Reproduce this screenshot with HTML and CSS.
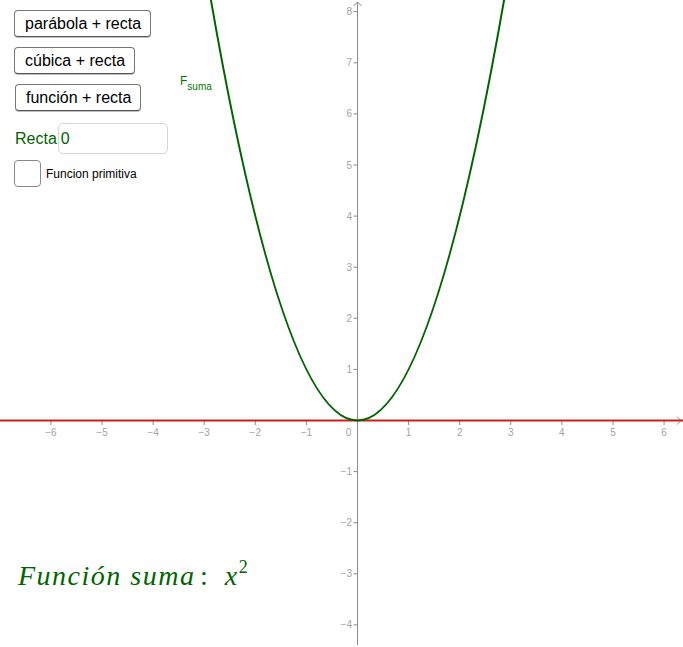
FILE: index.html
```html
<!DOCTYPE html>
<html lang="es">
<head>
<meta charset="utf-8">
<title>Función suma</title>
<link rel="stylesheet" href="styles.css">
</head>
<body>
<div class="app">
  <svg class="graph" width="683" height="647" viewBox="0 0 683 647" xmlns="http://www.w3.org/2000/svg">
    <g class="axis" stroke="#8c8c8c" stroke-width="1" fill="none">
      <line x1="0" y1="420.5" x2="682" y2="420.5"/>
      <line x1="357.5" y1="2" x2="357.5" y2="645"/>
      <polyline points="353.5,6 357.5,2 361.5,6"/>
      <polyline points="677,416.5 681,420.5 677,424.5"/>
      <!-- x ticks -->
      <line x1="50.9" y1="421" x2="50.9" y2="425"/>
      <line x1="102" y1="421" x2="102" y2="425"/>
      <line x1="153.1" y1="421" x2="153.1" y2="425"/>
      <line x1="204.2" y1="421" x2="204.2" y2="425"/>
      <line x1="255.3" y1="421" x2="255.3" y2="425"/>
      <line x1="306.4" y1="421" x2="306.4" y2="425"/>
      <line x1="408.6" y1="421" x2="408.6" y2="425"/>
      <line x1="459.7" y1="421" x2="459.7" y2="425"/>
      <line x1="510.8" y1="421" x2="510.8" y2="425"/>
      <line x1="561.9" y1="421" x2="561.9" y2="425"/>
      <line x1="613" y1="421" x2="613" y2="425"/>
      <line x1="664.1" y1="421" x2="664.1" y2="425"/>
      <!-- y ticks -->
      <line x1="353.5" y1="11.7" x2="357.5" y2="11.7"/>
      <line x1="353.5" y1="62.8" x2="357.5" y2="62.8"/>
      <line x1="353.5" y1="113.9" x2="357.5" y2="113.9"/>
      <line x1="353.5" y1="165" x2="357.5" y2="165"/>
      <line x1="353.5" y1="216.1" x2="357.5" y2="216.1"/>
      <line x1="353.5" y1="267.2" x2="357.5" y2="267.2"/>
      <line x1="353.5" y1="318.3" x2="357.5" y2="318.3"/>
      <line x1="353.5" y1="369.4" x2="357.5" y2="369.4"/>
      <line x1="353.5" y1="471.6" x2="357.5" y2="471.6"/>
      <line x1="353.5" y1="522.7" x2="357.5" y2="522.7"/>
      <line x1="353.5" y1="573.8" x2="357.5" y2="573.8"/>
      <line x1="353.5" y1="624.9" x2="357.5" y2="624.9"/>
    </g>
    <g class="xlabels" text-anchor="middle">
      <text x="50.9" y="436">−6</text>
      <text x="102" y="436">−5</text>
      <text x="153.1" y="436">−4</text>
      <text x="204.2" y="436">−3</text>
      <text x="255.3" y="436">−2</text>
      <text x="306.4" y="436">−1</text>
      <text x="348.5" y="436">0</text>
      <text x="408.6" y="436">1</text>
      <text x="459.7" y="436">2</text>
      <text x="510.8" y="436">3</text>
      <text x="561.9" y="436">4</text>
      <text x="613" y="436">5</text>
      <text x="664.1" y="436">6</text>
    </g>
    <g class="ylabels" text-anchor="end">
      <text x="352" y="15.2">8</text>
      <text x="352" y="66.3">7</text>
      <text x="352" y="117.4">6</text>
      <text x="352" y="168.5">5</text>
      <text x="352" y="219.6">4</text>
      <text x="352" y="270.7">3</text>
      <text x="352" y="321.8">2</text>
      <text x="352" y="372.9">1</text>
      <text x="352" y="475.1">−1</text>
      <text x="352" y="526.2">−2</text>
      <text x="352" y="577.3">−3</text>
      <text x="352" y="628.4">−4</text>
    </g>
    <line x1="0" y1="420.5" x2="683" y2="420.5" stroke="#cc1f1f" stroke-width="2"/>
    <path d="M209.31,-9.25 Q357.5,850.25 505.69,-9.25" fill="none" stroke="#006400" stroke-width="2"/>
  </svg>

  <div class="panel">
    <button class="btn">parábola + recta</button>
    <button class="btn">cúbica + recta</button>
    <button class="btn btn-shift">función + recta</button>
    <div class="input-row">
      <span class="input-label">Recta</span>
      <span class="input-box">0</span>
    </div>
    <div class="check-row">
      <span class="checkbox"></span>
      <span class="check-label">Funcion primitiva</span>
    </div>
  </div>

  <div class="fsuma">F<span class="sub">suma</span></div>

  <div class="formula"><span class="word">Función</span> <span class="word">suma</span> <span class="colon">:</span> <span class="var">x</span><span class="sup">2</span></div>
</div>
</body>
</html>
```

FILE: styles.css
```css
html, body {
  margin: 0;
  padding: 0;
  background: #ffffff;
}

.app {
  position: relative;
  width: 683px;
  height: 647px;
  overflow: hidden;
  font-family: "Liberation Sans", Arial, sans-serif;
}

.graph {
  position: absolute;
  left: 0;
  top: 0;
  display: block;
}

.xlabels text,
.ylabels text {
  font-family: "Liberation Sans", Arial, sans-serif;
  font-size: 10px;
  fill: #a3a3a3;
}

.panel {
  position: absolute;
  left: 14px;
  top: 10px;
  display: flex;
  flex-direction: column;
  align-items: flex-start;
}

.btn {
  box-sizing: border-box;
  font-family: "Liberation Sans", Arial, sans-serif;
  font-size: 16px;
  color: #000;
  background: #ffffff;
  border: 1px solid #777;
  border-bottom-color: #555;
  border-radius: 4px;
  box-shadow: 0 1px 0 rgba(0, 0, 0, 0.25);
  height: 27px;
  padding: 0 9px 0 10px;
  margin: 0 0 10px 0;
  line-height: 25px;
  cursor: pointer;
}

.btn-shift {
  margin-left: 1px;
}

.input-row {
  display: flex;
  align-items: center;
  margin-top: 2px;
  margin-left: 1px;
}

.input-label {
  font-size: 16px;
  color: #006400;
  margin-right: 1px;
}

.input-box {
  box-sizing: border-box;
  width: 110px;
  height: 31px;
  border: 1px solid #d6d6d6;
  border-radius: 5px;
  font-size: 16px;
  color: #006400;
  padding-left: 2px;
  line-height: 29px;
}

.check-row {
  display: flex;
  align-items: center;
  margin-top: 6px;
}

.checkbox {
  box-sizing: border-box;
  width: 27px;
  height: 27px;
  border: 1px solid #8a8a8a;
  border-radius: 4px;
  background: #fff;
}

.check-label {
  font-size: 12px;
  color: #000;
  margin-left: 5px;
}

.fsuma {
  position: absolute;
  left: 180px;
  top: 74px;
  font-size: 12px;
  color: #007a00;
}

.fsuma .sub {
  font-size: 10px;
  position: relative;
  top: 5px;
}

.formula {
  position: absolute;
  left: 18px;
  top: 560px;
  font-family: "Liberation Serif", "Times New Roman", serif;
  font-style: italic;
  font-size: 28px;
  color: #006400;
  white-space: nowrap;
  letter-spacing: 1.5px;
}

.formula .colon {
  font-style: normal;
  margin-left: -4px;
}

.formula .var {
  margin-left: 7px;
}

.formula .sup {
  font-style: normal;
  font-size: 18px;
  position: relative;
  top: -12px;
  letter-spacing: 0;
}
```
